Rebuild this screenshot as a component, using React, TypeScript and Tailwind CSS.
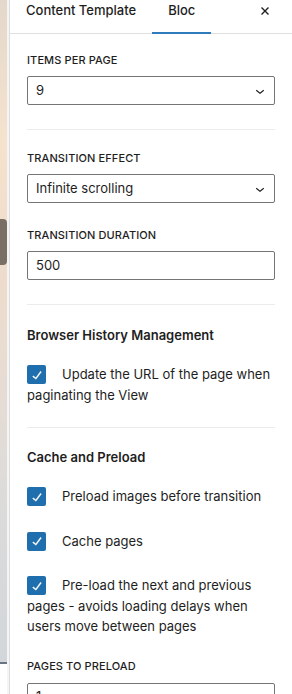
import { ReactNode } from "react";

const Chevron = () => (
  <svg width="18" height="18" viewBox="0 0 24 24" className="text-[#1e1e1e]">
    <path d="M17.5 11.6 12 16l-5.5-4.4.9-1.2L12 14l4.5-3.6 1 1.2z" fill="currentColor" />
  </svg>
);

const Check = () => (
  <svg width="18" height="18" viewBox="0 0 24 24">
    <path d="M16.7 7.1l-6.3 8.5-3.3-2.5-.9 1.2 4.5 3.4L17.9 8z" fill="#fff" stroke="#fff" strokeWidth="0.5" />
  </svg>
);

const Label = ({ children }: { children: ReactNode }) => (
  <div className="text-[11px] leading-[16px] font-medium uppercase text-[#1e1e1e] tracking-[0.1px]">
    {children}
  </div>
);

const Select = ({ value }: { value: string }) => (
  <div className="flex items-center justify-between h-[29px] border border-[#757575] rounded-[2px] pl-[8px] pr-[5px] text-[13px] text-[#1e1e1e]">
    <span>{value}</span>
    <Chevron />
  </div>
);

const Divider = () => <div className="h-px bg-[#ececec]" />;

const CheckRow = ({ children }: { children: ReactNode }) => (
  <div className="text-[13px] leading-[20.5px] text-[#1e1e1e]">
    <span className="inline-flex items-center justify-center align-top w-[19px] h-[19px] mt-px rounded-[2px] bg-[#1f6fae] mr-[16px]">
      <Check />
    </span>
    {children}
  </div>
);

const Heading = ({ children }: { children: ReactNode }) => (
  <div className="text-[13px] leading-[20px] font-semibold text-[#1e1e1e]">{children}</div>
);

export default function App() {
  return (
    <div
      className="flex w-[292px] h-[694px] overflow-hidden bg-white"
      style={{ fontFamily: "Inter, 'Noto Sans', sans-serif" }}
    >
      {/* canvas edge */}
      <div className="w-[7px] flex flex-col shrink-0">
        <div className="h-[662px] bg-[linear-gradient(180deg,#e4d8cc_0%,#f5e3cd_22%,#efdccb_38%,#e8dcd2_55%,#dcdbda_75%,#d2d6da_100%)] flex flex-col">
          <div className="h-[219px]" />
          <div className="h-[46px] bg-[#7a6f65] rounded-r-[4px]" />
        </div>
        <div className="h-[2px] bg-[#687482]" />
      </div>
      <div className="w-[3px] bg-[#f4f4f4] border-r border-[#dedede] shrink-0" />

      <div className="flex-1 flex flex-col min-w-0">
        {/* tabs */}
        <div className="flex h-[34px] border-b border-[#e0e0e0] text-[13px] font-medium text-[#1e1e1e] shrink-0">
          <div className="px-[16px] pt-[2px] leading-[16px]">Content Template</div>
          <div className="px-[16px] pt-[2px] leading-[16px] relative">
            Bloc
            <div className="absolute left-0 right-0 -bottom-px h-[2px] bg-[#2d7bbd]" />
          </div>
          <div className="ml-auto pr-[20px] pt-[2px]">
            <svg width="14" height="14" viewBox="0 0 24 24" className="mt-[2px]">
              <path d="M6 6l12 12M18 6L6 18" stroke="#1e1e1e" strokeWidth="2.4" />
            </svg>
          </div>
        </div>

        <div className="pl-[17px] pr-[17px] flex flex-col">
          <div className="pt-[18px]">
            <Label>Items per page</Label>
            <div className="mt-[8px]">
              <Select value="9" />
            </div>
          </div>
          <div className="mt-[24px]">
            <Divider />
          </div>

          <div className="pt-[20px]">
            <Label>Transition effect</Label>
            <div className="mt-[8px]">
              <Select value="Infinite scrolling" />
            </div>
          </div>
          <div className="pt-[24px]">
            <Label>Transition duration</Label>
            <div className="mt-[8px] flex items-center h-[29px] border border-[#757575] rounded-[2px] pl-[8px] text-[13px] text-[#1e1e1e]">
              500
            </div>
          </div>
          <div className="mt-[24px]">
            <Divider />
          </div>

          <div className="pt-[20px]">
            <Heading>Browser History Management</Heading>
            <div className="mt-[19px]">
              <CheckRow>Update the URL of the page when paginating the View</CheckRow>
            </div>
          </div>
          <div className="mt-[22px]">
            <Divider />
          </div>

          <div className="pt-[19px]">
            <Heading>Cache and Preload</Heading>
            <div className="mt-[19px] flex flex-col gap-[24px]">
              <CheckRow>Preload images before transition</CheckRow>
              <CheckRow>Cache pages</CheckRow>
              <CheckRow>Pre-load the next and previous pages - avoids loading delays when users move between pages</CheckRow>
            </div>
          </div>

          <div className="pt-[21px]">
            <Label>Pages to preload</Label>
            <div className="mt-[9px] flex items-center h-[29px] border border-[#757575] rounded-[2px] pl-[8px] text-[13px] text-[#1e1e1e]">
              1
            </div>
          </div>
        </div>
      </div>
    </div>
  );
}
